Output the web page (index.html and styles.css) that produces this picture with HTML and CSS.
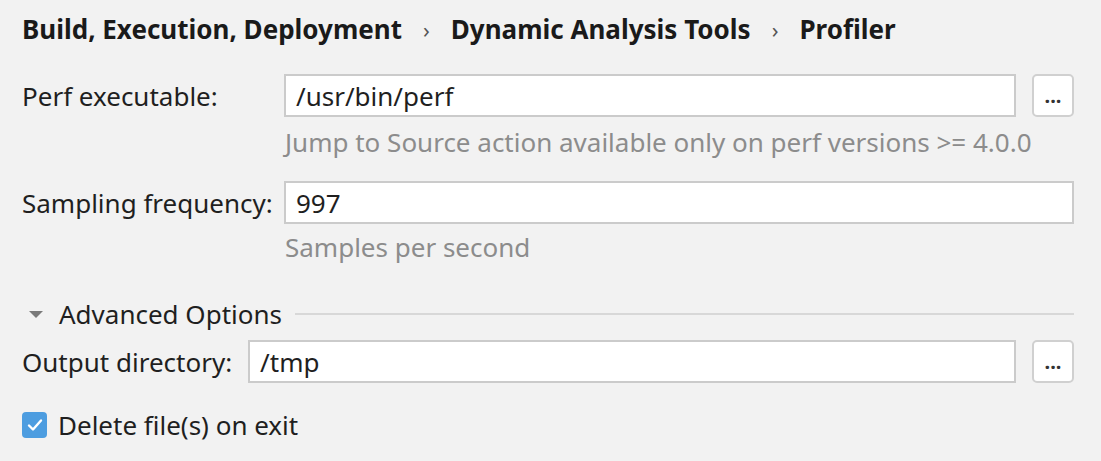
FILE: index.html
```html
<!DOCTYPE html>
<html>
<head>
<meta charset="utf-8">
<link rel="stylesheet" href="styles.css">
</head>
<body>
<div class="page">
  <div class="crumbs">
    <span>Build, Execution, Deployment</span>
    <span class="sep">›</span>
    <span>Dynamic Analysis Tools</span>
    <span class="sep">›</span>
    <span>Profiler</span>
  </div>

  <div class="form">
    <div class="label">Perf executable:</div>
    <div class="field">/usr/bin/perf</div>
    <div class="browse">...</div>

    <div class="hint">Jump to Source action available only on perf versions &gt;= 4.0.0</div>

    <div class="label">Sampling frequency:</div>
    <div class="field wide">997</div>

    <div class="hint hint2">Samples per second</div>
  </div>

  <div class="group">
    <span class="tri"></span>
    <span class="group-title">Advanced Options</span>
    <span class="group-line"></span>
  </div>

  <div class="row">
    <div class="label">Output directory:</div>
    <div class="field">/tmp</div>
    <div class="browse">...</div>
  </div>

  <div class="check">
    <span class="box">
      <svg width="16" height="14" viewBox="0 0 16 14"><path d="M2 7.5 L6 11.5 L14 2.5" fill="none" stroke="#fff" stroke-width="2.4" stroke-linecap="round" stroke-linejoin="round"/></svg>
    </span>
    <span>Delete file(s) on exit</span>
  </div>
</div>
</body>
</html>
```

FILE: styles.css
```css
html, body {
  margin: 0;
  padding: 0;
  background: #f2f2f2;
}
body {
  font-family: "Noto Sans", "DejaVu Sans", sans-serif;
  font-size: 26px;
  color: #1f1f1f;
}
.page {
  padding: 13px 27px 0 22px;
  width: 1052px;
}
.crumbs {
  display: flex;
  align-items: center;
  gap: 20px;
  font-weight: bold;
  font-size: 26px;
  line-height: 32px;
  color: #1a1a1a;
}
.crumbs .sep {
  font-weight: normal;
  color: #555;
  font-size: 22px;
  padding: 0 1px;
}
.form {
  margin-top: 29px;
  display: grid;
  grid-template-columns: 250px 1fr 46px;
  column-gap: 12px;
  align-items: center;
}
.label {
  line-height: 30px;
  white-space: nowrap;
}
.field {
  height: 39px;
  border: 2px solid #cbcbcb;
  background: #fff;
  display: flex;
  align-items: center;
  padding-left: 10px;
  box-sizing: content-box;
  line-height: 30px;
}
.field.wide {
  grid-column: 2 / 4;
}
.browse {
  justify-self: end;
  height: 39px;
  width: 38px;
  border: 2px solid #d0d0d0;
  border-radius: 5px;
  background: #fff;
  display: flex;
  align-items: center;
  justify-content: center;
  font-weight: bold;
  font-size: 20px;
  line-height: 30px;
  color: #333;
  box-sizing: content-box;
}
.hint {
  grid-column: 2 / 4;
  color: #8c8c8c;
  line-height: 30px;
  margin: 10px 0 24px 1px;
}
.hint2 {
  margin: 8px 0 0 1px;
}
.group {
  display: flex;
  align-items: center;
  margin-top: 37px;
  line-height: 30px;
}
.tri {
  width: 0;
  height: 0;
  border-left: 7px solid transparent;
  border-right: 7px solid transparent;
  border-top: 7px solid #7a7a7a;
  margin: 0 16px 0 7px;
}
.group-line {
  flex: 1;
  height: 2px;
  background: #d8d8d8;
  margin-left: 13px;
}
.row {
  margin-top: 11px;
  display: grid;
  grid-template-columns: auto 1fr 46px;
  column-gap: 16px;
  align-items: center;
}
.row .field {
  margin-right: -4px;
}
.check {
  display: flex;
  align-items: center;
  gap: 11px;
  margin-top: 27px;
  line-height: 30px;
}
.box {
  width: 25px;
  height: 26px;
  border-radius: 4px;
  background: #4d9de0;
  display: flex;
  align-items: center;
  justify-content: center;
}
```
